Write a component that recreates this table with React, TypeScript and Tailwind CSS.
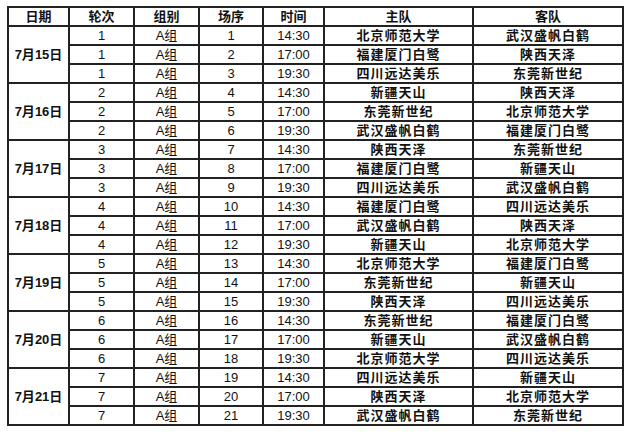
import React from "react";

const teams: [string, string][] = [
  ["北京师范大学", "武汉盛帆白鹤"],
  ["福建厦门白鹭", "陕西天泽"],
  ["四川远达美乐", "东莞新世纪"],
  ["新疆天山", "陕西天泽"],
  ["东莞新世纪", "北京师范大学"],
  ["武汉盛帆白鹤", "福建厦门白鹭"],
  ["陕西天泽", "东莞新世纪"],
  ["福建厦门白鹭", "新疆天山"],
  ["四川远达美乐", "武汉盛帆白鹤"],
  ["福建厦门白鹭", "四川远达美乐"],
  ["武汉盛帆白鹤", "陕西天泽"],
  ["新疆天山", "北京师范大学"],
  ["北京师范大学", "福建厦门白鹭"],
  ["东莞新世纪", "新疆天山"],
  ["陕西天泽", "四川远达美乐"],
  ["东莞新世纪", "福建厦门白鹭"],
  ["新疆天山", "武汉盛帆白鹤"],
  ["北京师范大学", "四川远达美乐"],
  ["四川远达美乐", "新疆天山"],
  ["陕西天泽", "北京师范大学"],
  ["武汉盛帆白鹤", "东莞新世纪"],
];

const times = ["14:30", "17:00", "19:30"];
const font = { fontFamily: '"Liberation Sans", Arial, "Noto Sans CJK SC", sans-serif' };

export default function App() {
  const rows = teams.map((t, i) => {
    const day = Math.floor(i / 3);
    return { i, day, first: i % 3 === 0, home: t[0], away: t[1], time: times[i % 3] };
  });
  const cell = "border-2 border-[#222] h-[19px] p-0 text-center align-middle leading-[15px]";
  return (
    <div className="w-[627px] h-[432px] bg-white pl-[7px] pt-[6px]" style={font}>
      <table className="border-collapse border-2 border-black text-[13px] text-[#111] table-fixed w-[615px]">
        <colgroup>
          <col className="w-[61px]" />
          <col className="w-[65px]" />
          <col className="w-[65px]" />
          <col className="w-[64px]" />
          <col className="w-[61px]" />
          <col className="w-[149px]" />
          <col className="w-[150px]" />
        </colgroup>
        <thead>
          <tr className="font-bold">
            <th className={cell}>日期</th>
            <th className={cell}>轮次</th>
            <th className={cell}>组别</th>
            <th className={cell}>场序</th>
            <th className={cell}>时间</th>
            <th className={cell}>主队</th>
            <th className={cell}>客队</th>
          </tr>
        </thead>
        <tbody>
          {rows.map((r) => (
            <tr key={r.i}>
              {r.first && (
                <td rowSpan={3} className={cell + " font-bold"}>
                  7月{15 + r.day}日
                </td>
              )}
              <td className={cell}>{r.day + 1}</td>
              <td className={cell}>A组</td>
              <td className={cell}>{r.i + 1}</td>
              <td className={cell}>{r.time}</td>
              <td className={cell + " font-bold tracking-[1px]"}>{r.home}</td>
              <td className={cell + " font-bold tracking-[1px]"}>{r.away}</td>
            </tr>
          ))}
        </tbody>
      </table>
    </div>
  );
}
